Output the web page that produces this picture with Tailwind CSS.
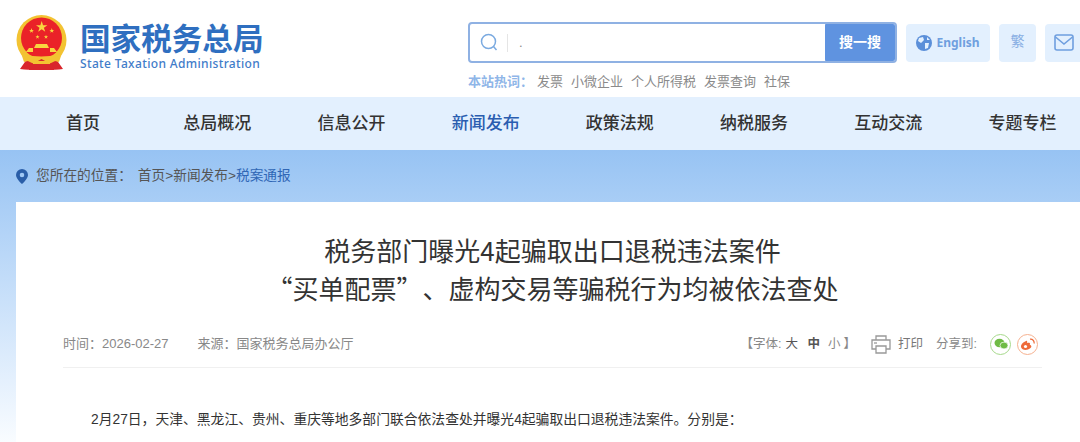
<!DOCTYPE html>
<html lang="zh-CN">
  <head>
    <meta charset="UTF-8" />
    <title>税务部门曝光4起骗取出口退税违法案件</title>
    <script src="https://cdn.jsdelivr.net/npm/@tailwindcss/browser@4"></script>
  </head>
  <body class="bg-white h-[442px] w-[1080px] overflow-hidden font-['Liberation_Sans','Noto_Sans_CJK_SC',sans-serif]">
    <!-- Header -->
    <header class="h-[97px] flex justify-between pl-[16px]">
      <div class="flex items-start pt-[15px] gap-[13px]">
        <svg width="51" height="56" viewBox="0 0 51 56">
          <defs>
            <polygon id="star" points="0,-1 .225,-.309 .951,-.309 .363,.118 .588,.809 0,.382 -.588,.809 -.363,.118 -.951,-.309 -.225,-.309" fill="#f9d63f" />
          </defs>
          <path d="M11 44 L4 54 Q14 56 25.5 53 Q37 56 47 54 L40 44 Z" fill="#d9262c" />
          <circle cx="25.5" cy="25" r="25" fill="#f3c332" />
          <circle cx="25.5" cy="23" r="20.5" fill="#ea2228" />
          <use href="#star" transform="translate(25.7 12) scale(6)" />
          <use href="#star" transform="translate(15.5 15.7) scale(2.6)" />
          <use href="#star" transform="translate(35.8 15.7) scale(2.6)" />
          <use href="#star" transform="translate(21.5 22) scale(2.2)" />
          <use href="#star" transform="translate(30 22) scale(2.2)" />
          <path d="M10 37 H41 L38 33 H33 L31 29 H20 L18 33 H13 Z" fill="#f9d63f" />
          <path d="M17 33 H34 V37 H17 Z" fill="#ea2228" />
          <path d="M5 38 Q25 45 46 38 L43 47 Q25 41 8 47 Z" fill="#f3c332" />
          <path d="M13 51 L25.5 44 L38 51 L38 55 L13 55 Z" fill="#d9262c" />
          <path d="M17 46 H34 V49 H17 Z" fill="#f3c332" />
        </svg>
        <div class="flex flex-col">
          <div class="text-[30.6px] leading-[34px] font-bold text-[#2f6fc0] mt-[5px] font-['Noto_Sans_CJK_SC',sans-serif]">国家税务总局</div>
          <div class="text-[12px] leading-[14px] font-['Noto_Sans',sans-serif] font-medium tracking-[0.35px] text-[#3f7cc9] mt-[3px]">State Taxation Administration</div>
        </div>
      </div>
      <div class="w-[612px] shrink-0 pt-[22px]">
        <div class="flex gap-[9px] items-center">
          <div class="w-[429px] h-[41px] shrink-0 rounded-[4px] border-2 border-[#8fb1e3] flex items-center overflow-hidden">
            <svg class="ml-[10px]" width="18" height="19" viewBox="0 0 18 19" fill="none" stroke="#7baae0" stroke-width="1.5">
              <circle cx="8.5" cy="8.5" r="7" />
              <path d="M13.5 13.5 L16.5 17" />
            </svg>
            <div class="w-px h-[18px] bg-[#e5e5e5] ml-[9px]"></div>
            <div class="flex-1 text-[13px] text-[#888] pl-[11px]">.</div>
            <button class="w-[70px] h-[41px] bg-[#5f93e0] text-white text-[14px] font-bold rounded-l-[4px]">搜一搜</button>
          </div>
          <div class="w-[84px] h-[38px] shrink-0 rounded-[4px] bg-[#e3f0fe] flex items-center justify-center gap-[4px] text-[#6f9fdf] text-[12px] font-bold font-['Noto_Sans',sans-serif]">
            <svg width="16" height="16" viewBox="0 0 16 16">
              <circle cx="8" cy="8" r="8" fill="#5b8fd9" />
              <path d="M3 3 L7 2 L8 5 L5 8 L2 6 Z M9 8 L13 8 L12 13 L9 14 Z M11 2 L14 5 L11 5 Z" fill="#e3f0fe" />
            </svg>
            English
          </div>
          <div class="w-[37px] h-[38px] shrink-0 rounded-[4px] bg-[#e3f0fe] flex items-center justify-center text-[#88aee3] text-[14px] pb-[3px]">繁</div>
          <div class="w-[42px] h-[38px] shrink-0 rounded-l-[4px] bg-[#e3f0fe] flex items-center pl-[9px]">
            <svg width="20" height="17" viewBox="0 0 20 17" fill="none" stroke="#6f9fdf" stroke-width="1.6">
              <rect x="1" y="1" width="18" height="15" rx="2" />
              <path d="M1.5 3 L10 10 L18.5 3" />
            </svg>
          </div>
        </div>
        <div class="flex mt-[10px] text-[13px] leading-[18px] text-[#8a8a8a]">
          <span class="font-bold text-[#8fb6e8]">本站热词&#xFF1A;</span>
          <span class="ml-[4px]">发票</span>
          <span class="ml-[8px]">小微企业</span>
          <span class="ml-[8px]">个人所得税</span>
          <span class="ml-[8px]">发票查询</span>
          <span class="ml-[8px]">社保</span>
        </div>
      </div>
    </header>

    <!-- Nav -->
    <nav class="h-[53px] bg-[#e3f0fe] flex pl-[16px] items-center text-[17px] font-medium text-[#333]">
      <a class="w-[134.2px] shrink-0 text-center">首页</a>
      <a class="w-[134.2px] shrink-0 text-center">总局概况</a>
      <a class="w-[134.2px] shrink-0 text-center">信息公开</a>
      <a class="w-[134.2px] shrink-0 text-center text-[#2a5db0]">新闻发布</a>
      <a class="w-[134.2px] shrink-0 text-center">政策法规</a>
      <a class="w-[134.2px] shrink-0 text-center">纳税服务</a>
      <a class="w-[134.2px] shrink-0 text-center">互动交流</a>
      <a class="w-[134.2px] shrink-0 text-center">专题专栏</a>
    </nav>

    <!-- Article area -->
    <main class="bg-gradient-to-b from-[#97c3f3] to-[#f9fcff] h-[292px] pl-[16px]">
      <div class="h-[52px] flex items-center text-[13.7px] text-[#555]">
        <svg width="12" height="15" viewBox="0 0 12 15">
          <path fill-rule="evenodd" d="M6 0 A6 6 0 0 1 12 6 C12 10 6 15 6 15 C6 15 0 10 0 6 A6 6 0 0 1 6 0 Z M6 3.7 A2.3 2.3 0 1 0 6 8.3 A2.3 2.3 0 1 0 6 3.7 Z" fill="#2a5ea8" />
        </svg>
        <span class="ml-[8px]">您所在的位置&#xFF1A;</span>
        <span class="ml-[6px]">首页&gt;新闻发布&gt;<span class="text-[#2f66b5]">税案通报</span></span>
      </div>
      <article class="bg-white h-[240px] pt-[29px] pl-[47px] pr-[38px]">
        <h1 class="text-[26px] leading-[38px] text-[#333] text-center font-['Noto_Sans_CJK_SC',sans-serif] [text-spacing-trim:space-all]">
          税务部门曝光4起骗取出口退税违法案件<br />“买单配票”、虚构交易等骗税行为均被依法查处
        </h1>
        <div class="mt-[17px] h-[44px] flex items-center border-b border-[#f0f0f0] text-[13px] text-[#888] pb-[3px]">
          <span>时间&#xFF1A;2026-02-27</span>
          <span class="ml-[29px]">来源&#xFF1A;国家税务总局办公厅</span>
          <div class="ml-auto mr-[4px] flex items-center text-[12.5px]">
            <span>【字体:</span>
            <span class="ml-[4px] text-[#555]">大</span>
            <span class="ml-[9.5px] font-bold text-[#555]">中</span>
            <span class="ml-[8px]">小</span>
            <span class="ml-[3px]">】</span>
            <svg class="ml-[15px]" width="20" height="19" viewBox="0 0 20 19" fill="none" stroke="#999" stroke-width="1.3">
              <path d="M5 5 V1 H15 V5" />
              <path d="M5 14 H1 V5 H19 V14 H15" />
              <path d="M5 11 H15 V18 H5 Z" />
              <path d="M3 8 H6" />
            </svg>
            <span class="ml-[7px] text-[#777]">打印</span>
            <span class="ml-[13px]">分享到:</span>
            <span class="ml-[13px] w-[21px] h-[21px] rounded-full border border-[#a6d98b] flex items-center justify-center">
              <svg width="14" height="12" viewBox="0 0 14 12">
                <ellipse cx="5.5" cy="5" rx="5" ry="4.2" fill="#6fbb45" />
                <ellipse cx="10" cy="7.5" rx="4" ry="3.4" fill="#6fbb45" stroke="#fff" stroke-width="0.7" />
              </svg>
            </span>
            <span class="ml-[6px] w-[21px] h-[21px] rounded-full border border-[#f6b18f] flex items-center justify-center">
              <svg width="15" height="13" viewBox="0 0 15 13">
                <path d="M6 3 C2.5 4.5 0.5 7 1 9 C1.5 11.5 5 12.5 8 11.5 C11 10.5 12 8.5 11 7.5 C10 6.8 9.5 6.8 10 5.5 C10 4.5 8.5 4.5 7 5 C7.5 3 7 2.5 6 3 Z" fill="#ee6b3a" />
                <circle cx="5.5" cy="8.5" r="1.6" fill="#fff" />
                <path d="M10 1.2 A3.5 3.5 0 0 1 14 5.5" fill="none" stroke="#ee6b3a" stroke-width="1.2" />
              </svg>
            </span>
          </div>
        </div>
        <p class="mt-[42px] pl-[28px] text-[13.8px] leading-[20px] text-[#333] whitespace-nowrap">2月27日&#xFF0C;天津、黑龙江、贵州、重庆等地多部门联合依法查处并曝光4起骗取出口退税违法案件。分别是&#xFF1A;</p>
      </article>
    </main>
  </body>
</html>
